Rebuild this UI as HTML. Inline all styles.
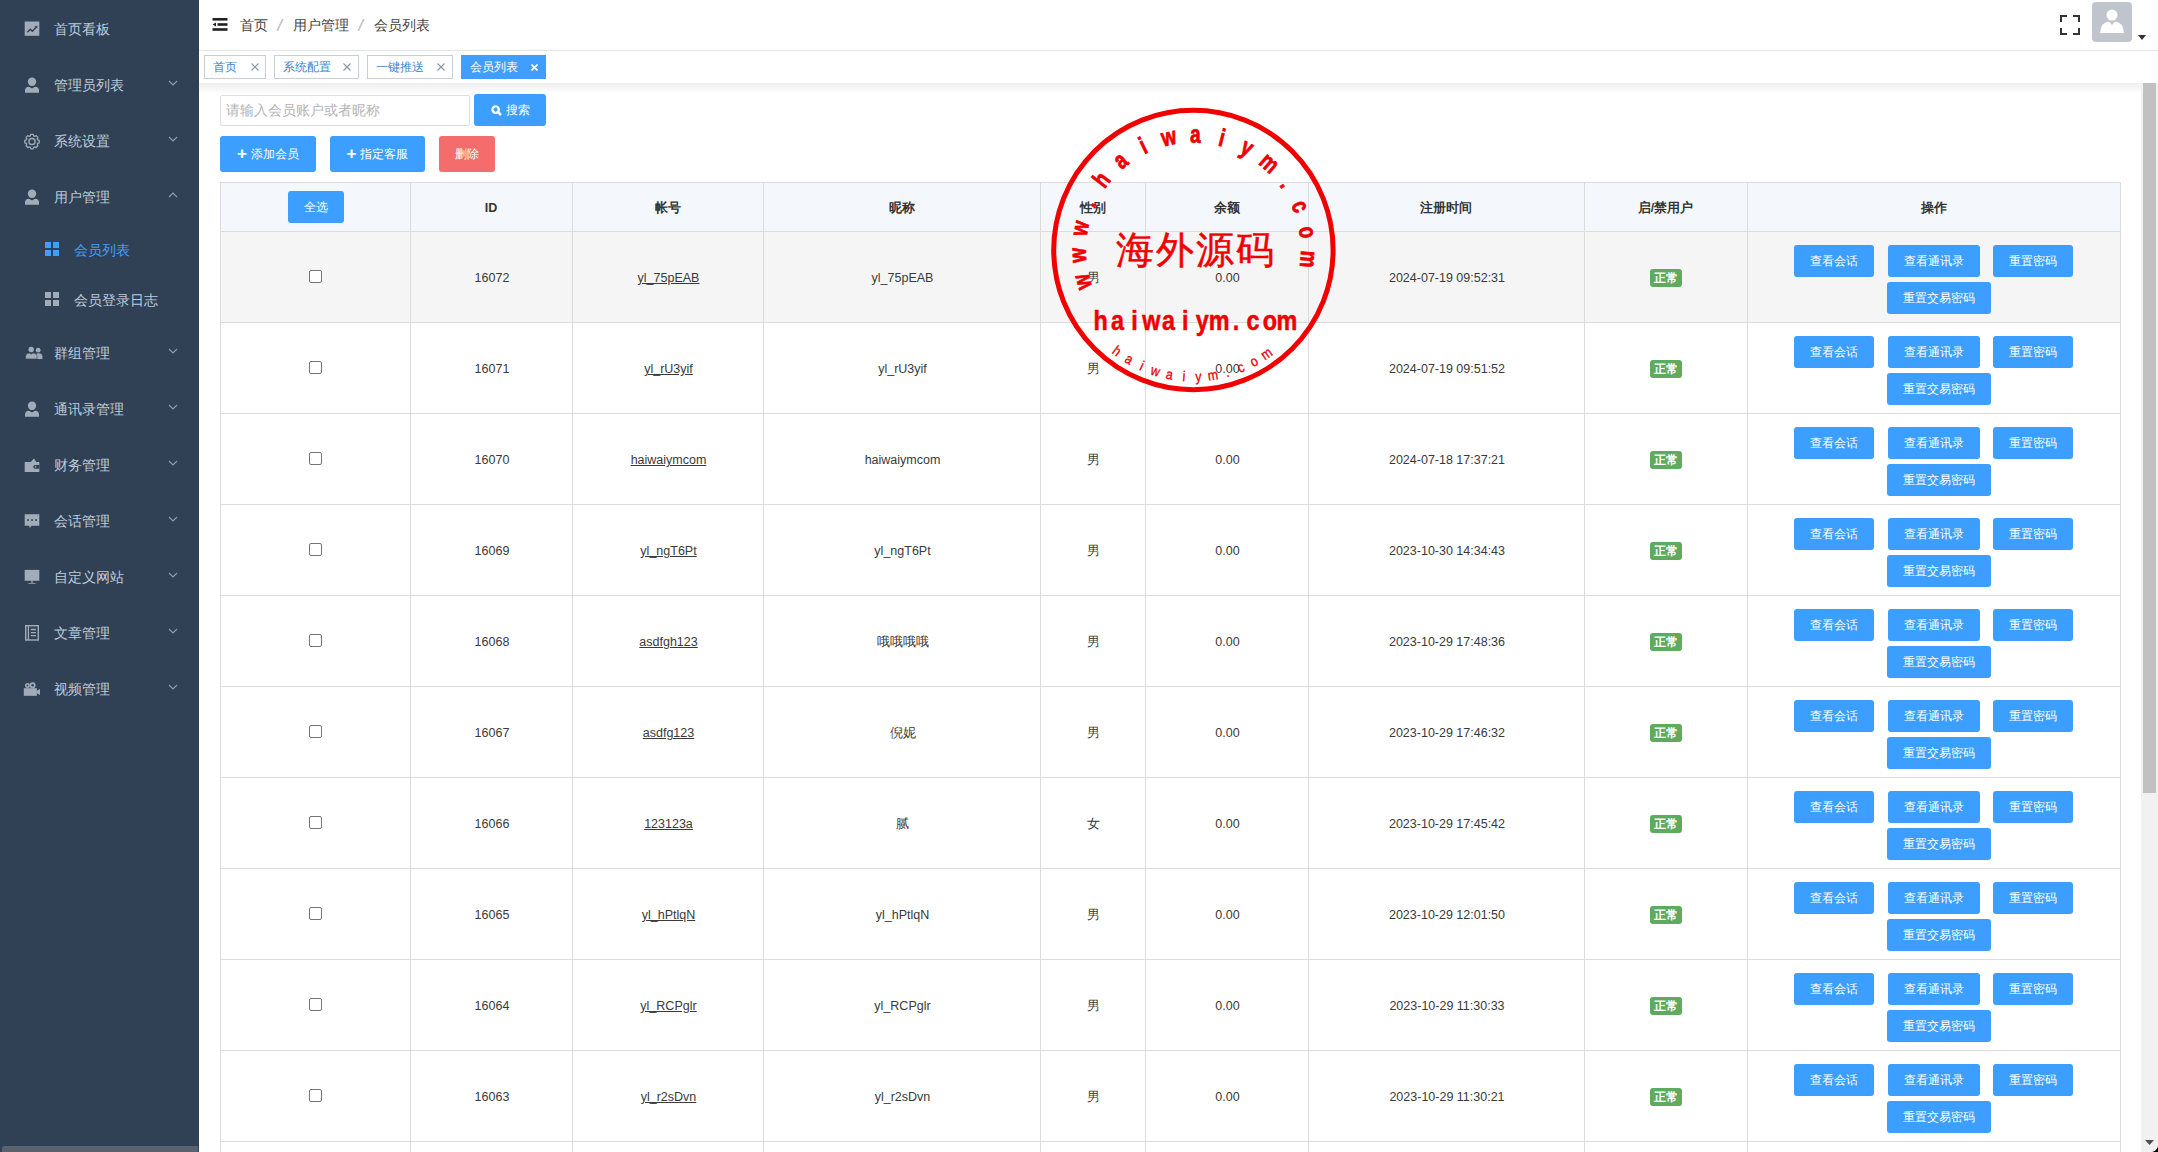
<!DOCTYPE html><html><head><meta charset="utf-8"><style>
*{box-sizing:border-box;margin:0;padding:0}
html,body{width:2158px;height:1152px;overflow:hidden;background:#fff;font-family:"Liberation Sans",sans-serif;}
.abs{position:absolute}
#side{position:absolute;left:0;top:0;width:199px;height:1152px;background:#304156}
.mi{position:absolute;left:0;width:199px;height:56px;color:#bfcbd9;font-size:14px}
.mi .t{position:absolute;left:54px;top:21px;line-height:16px;white-space:nowrap}
.mi .ic{position:absolute;left:25px;top:21px;width:15px;height:15px}
.mi .ar{position:absolute;left:168px;top:24px;width:10px;height:6px}
.sub{position:absolute;left:0;width:199px;height:50px;color:#bfcbd9;font-size:14px}
.sub .t{position:absolute;left:74px;top:18px;line-height:16px;white-space:nowrap}
.sub .ic{position:absolute;left:45px;top:18px;width:14px;height:14px}
#hdr{position:absolute;left:199px;top:0;width:1959px;height:51px;background:#fff;border-bottom:1px solid #e6e6e6}
#tags{position:absolute;left:199px;top:51px;width:1959px;height:32px;background:#fff}
#tagsh{position:absolute;left:199px;top:83px;width:1959px;height:11px;background:linear-gradient(rgba(0,0,0,.065),rgba(0,0,0,0))}
.tag{position:absolute;top:4px;height:24px;border:1px solid #c9ced6;background:#fff;color:#3a85d0;font-size:12px;line-height:22px;padding-left:8px;white-space:nowrap}
.tag .x{position:absolute;top:0;font-size:12px;color:#8aa}
.btn{position:absolute;background:#3c9fff;color:#fff;border-radius:3px;font-size:12px;text-align:center;white-space:nowrap}
.tline{position:absolute;background:#dcdcdc}
.cell{position:absolute;text-align:center;color:#3a3a3a;font-size:12.5px;white-space:nowrap}
.hcell{position:absolute;text-align:center;color:#333;font-size:12.5px;font-weight:bold;white-space:nowrap}
.cb{position:absolute;width:13px;height:13px;border:1px solid #767676;border-radius:2px;background:#fff}
.ok{position:absolute;width:32px;height:18px;background:#5eaa5e;border-radius:3px;color:#fff;font-size:12px;line-height:18px;text-align:center;font-weight:bold}
</style></head><body>
<div id="side">
<div class="mi" style="top:0px"><svg class="abs" style="left:0;top:0" width="50" height="56" viewBox="0 0 50 56"><rect x="24.7" y="21.5" width="14.6" height="14.3" fill="#a2abb8"/><path d="M27.3 32.3 L30.3 29.3 L32.3 31.2 L36.2 27.2" stroke="#304156" stroke-width="1.4" fill="none"/><path d="M37.3 25.8 L37.3 28.6 L34.6 26.1Z" fill="#304156"/></svg><span class="t">首页看板</span></div>
<div class="mi" style="top:56px"><svg class="abs" style="left:0;top:0" width="50" height="56" viewBox="0 0 50 56"><circle cx="32" cy="25.8" r="4.2" fill="#a2abb8"/><path d="M25 36.7 V34.5 Q25 31 29 30.8 L32 32.6 L35 30.8 Q39 31 39 34.5 V36.7Z" fill="#a2abb8"/></svg><span class="t">管理员列表</span><svg class="ar" viewBox="0 0 10 6"><path d="M1 1 L5 5 L9 1" stroke="#909cad" stroke-width="1.2" fill="none"/></svg></div>
<div class="mi" style="top:112px"><svg class="abs" style="left:0;top:0" width="50" height="56" viewBox="0 0 50 56"><path d="M39.20 28.40 L39.20 30.80 L37.63 31.36 L37.23 32.34 L37.94 33.84 L36.24 35.54 L34.74 34.83 L33.76 35.23 L33.20 36.80 L30.80 36.80 L30.24 35.23 L29.26 34.83 L27.76 35.54 L26.06 33.84 L26.77 32.34 L26.37 31.36 L24.80 30.80 L24.80 28.40 L26.37 27.84 L26.77 26.86 L26.06 25.36 L27.76 23.66 L29.26 24.37 L30.24 23.97 L30.80 22.40 L33.20 22.40 L33.76 23.97 L34.74 24.37 L36.24 23.66 L37.94 25.36 L37.23 26.86 L37.63 27.84 Z" stroke="#a2abb8" stroke-width="1.3" fill="none" stroke-linejoin="round"/><circle cx="32" cy="29.6" r="3.1" stroke="#a2abb8" stroke-width="1.3" fill="none"/></svg><span class="t">系统设置</span><svg class="ar" viewBox="0 0 10 6"><path d="M1 1 L5 5 L9 1" stroke="#909cad" stroke-width="1.2" fill="none"/></svg></div>
<div class="mi" style="top:168px"><svg class="abs" style="left:0;top:0" width="50" height="56" viewBox="0 0 50 56"><circle cx="32" cy="25.8" r="4.2" fill="#a2abb8"/><path d="M25 36.7 V34.5 Q25 31 29 30.8 L32 32.6 L35 30.8 Q39 31 39 34.5 V36.7Z" fill="#a2abb8"/></svg><span class="t">用户管理</span><svg class="ar" viewBox="0 0 10 6"><path d="M1 5 L5 1 L9 5" stroke="#909cad" stroke-width="1.2" fill="none"/></svg></div>
<div class="sub" style="top:224px;color:#409eff"><svg class="ic" viewBox="0 0 14 14"><rect x="0" y="0" width="6" height="6" fill="#409eff"/><rect x="8" y="0" width="6" height="6" fill="#409eff"/><rect x="0" y="8" width="6" height="6" fill="#409eff"/><rect x="8" y="8" width="6" height="6" fill="#409eff"/></svg><span class="t">会员列表</span></div>
<div class="sub" style="top:274px"><svg class="ic" viewBox="0 0 14 14"><rect x="0" y="0" width="6" height="6" fill="#a2abb8"/><rect x="8" y="0" width="6" height="6" fill="#a2abb8"/><rect x="0" y="8" width="6" height="6" fill="#a2abb8"/><rect x="8" y="8" width="6" height="6" fill="#a2abb8"/></svg><span class="t">会员登录日志</span></div>
<div class="mi" style="top:324px"><svg class="abs" style="left:0;top:0" width="50" height="56" viewBox="0 0 50 56"><circle cx="38.2" cy="26.2" r="2.4" fill="#a2abb8"/><path d="M35.5 35 V31.5 Q36 29.4 38.2 29.3 Q42.4 29.4 42.4 32.5 V35Z" fill="#a2abb8"/><circle cx="31.2" cy="25.5" r="2.8" fill="#304156" stroke="#304156" stroke-width="1"/><circle cx="31.2" cy="25.5" r="2.7" fill="#a2abb8"/><path d="M25.6 35 V32 Q25.8 29.2 29.5 29 L31.2 30 L33 29 Q37 29.2 37 32 V35Z" fill="#a2abb8" stroke="#304156" stroke-width="0.6"/></svg><span class="t">群组管理</span><svg class="ar" viewBox="0 0 10 6"><path d="M1 1 L5 5 L9 1" stroke="#909cad" stroke-width="1.2" fill="none"/></svg></div>
<div class="mi" style="top:380px"><svg class="abs" style="left:0;top:0" width="50" height="56" viewBox="0 0 50 56"><circle cx="32" cy="25.8" r="4.2" fill="#a2abb8"/><path d="M25 36.7 V34.5 Q25 31 29 30.8 L32 32.6 L35 30.8 Q39 31 39 34.5 V36.7Z" fill="#a2abb8"/></svg><span class="t">通讯录管理</span><svg class="ar" viewBox="0 0 10 6"><path d="M1 1 L5 5 L9 1" stroke="#909cad" stroke-width="1.2" fill="none"/></svg></div>
<div class="mi" style="top:436px"><svg class="abs" style="left:0;top:0" width="50" height="56" viewBox="0 0 50 56"><path d="M30.7 26 L34 22.4 L36.3 26Z" fill="#a2abb8"/><rect x="24.7" y="26" width="14.6" height="10" fill="#a2abb8"/><path d="M39.3 29 H35.2 Q33.2 29 33.2 30.85 Q33.2 32.7 35.2 32.7 H39.3Z" fill="#304156"/><circle cx="35.6" cy="30.85" r="0.8" fill="#a2abb8"/></svg><span class="t">财务管理</span><svg class="ar" viewBox="0 0 10 6"><path d="M1 1 L5 5 L9 1" stroke="#909cad" stroke-width="1.2" fill="none"/></svg></div>
<div class="mi" style="top:492px"><svg class="abs" style="left:0;top:0" width="50" height="56" viewBox="0 0 50 56"><path d="M24.7 22.2 H39.3 V33.7 H31.6 L29.8 36 L29 33.7 H24.7Z" fill="#a2abb8"/><rect x="27.2" y="27.2" width="1.7" height="1.7" fill="#304156"/><rect x="31.2" y="27.2" width="1.7" height="1.7" fill="#304156"/><rect x="35.2" y="27.2" width="1.7" height="1.7" fill="#304156"/></svg><span class="t">会话管理</span><svg class="ar" viewBox="0 0 10 6"><path d="M1 1 L5 5 L9 1" stroke="#909cad" stroke-width="1.2" fill="none"/></svg></div>
<div class="mi" style="top:548px"><svg class="abs" style="left:0;top:0" width="50" height="56" viewBox="0 0 50 56"><rect x="24.7" y="21.9" width="14.6" height="10.9" fill="#a2abb8"/><rect x="31.2" y="32.8" width="1.6" height="1.8" fill="#a2abb8"/><path d="M27.2 35.8 Q32 33.6 36.9 35.8Z" fill="#a2abb8"/></svg><span class="t">自定义网站</span><svg class="ar" viewBox="0 0 10 6"><path d="M1 1 L5 5 L9 1" stroke="#909cad" stroke-width="1.2" fill="none"/></svg></div>
<div class="mi" style="top:604px"><svg class="abs" style="left:0;top:0" width="50" height="56" viewBox="0 0 50 56"><rect x="25.7" y="21.7" width="12.6" height="14.3" stroke="#a2abb8" stroke-width="1.4" fill="none"/><path d="M28.4 22 V36" stroke="#a2abb8" stroke-width="1.3"/><path d="M30.8 25.5 H36 M30.8 28.6 H36 M30.8 31.7 H36" stroke="#a2abb8" stroke-width="1.3"/></svg><span class="t">文章管理</span><svg class="ar" viewBox="0 0 10 6"><path d="M1 1 L5 5 L9 1" stroke="#909cad" stroke-width="1.2" fill="none"/></svg></div>
<div class="mi" style="top:660px"><svg class="abs" style="left:0;top:0" width="50" height="56" viewBox="0 0 50 56"><circle cx="27.5" cy="25.5" r="2.5" fill="#a2abb8"/><circle cx="32.6" cy="25.2" r="3" fill="#a2abb8"/><circle cx="32.6" cy="25.2" r="1.2" fill="#304156"/><circle cx="27.5" cy="25.5" r="0.9" fill="#304156"/><rect x="23.8" y="28.2" width="13.1" height="7.6" fill="#a2abb8"/><path d="M36.9 30.8 L40 28.9 V35 L36.9 33.2Z" fill="#a2abb8"/></svg><span class="t">视频管理</span><svg class="ar" viewBox="0 0 10 6"><path d="M1 1 L5 5 L9 1" stroke="#909cad" stroke-width="1.2" fill="none"/></svg></div>
<div class="abs" style="left:2px;top:1146px;width:196px;height:6px;background:#5a6270;border-radius:3px 0 0 0"></div>
</div>
<div id="hdr">
<svg class="abs" style="left:13px;top:18px" width="16" height="13" viewBox="0 0 16 13"><rect x="0.5" y="0" width="15" height="2.6" fill="#222"/><rect x="5.5" y="5.2" width="10" height="2.6" fill="#222"/><rect x="0.5" y="10.2" width="15" height="2.6" fill="#222"/><path d="M0.6 6.5 L4 4.6 V8.4Z" fill="#222"/></svg>
<div class="abs" style="left:41px;top:17px;font-size:14px;line-height:16px;color:#444;white-space:nowrap">首页</div>
<svg class="abs" style="left:77px;top:19px" width="8" height="12" viewBox="0 0 8 12"><path d="M1.2 12 L6.8 0" stroke="#c0c4cc" stroke-width="1.7"/></svg>
<div class="abs" style="left:94px;top:17px;font-size:14px;line-height:16px;color:#444;white-space:nowrap">用户管理</div>
<svg class="abs" style="left:158px;top:19px" width="8" height="12" viewBox="0 0 8 12"><path d="M1.2 12 L6.8 0" stroke="#c0c4cc" stroke-width="1.7"/></svg>
<div class="abs" style="left:174.5px;top:17px;font-size:14px;line-height:16px;color:#444;white-space:nowrap">会员列表</div>
<svg class="abs" style="left:1861px;top:15px" width="20" height="20" viewBox="0 0 20 20"><path d="M1 7 V1 H7 M13 1 H19 V7 M19 13 V19 H13 M7 19 H1 V13" stroke="#333" stroke-width="2" fill="none"/></svg>
<div class="abs" style="left:1893px;top:2px;width:40px;height:40px;background:#c0c4cc;border-radius:4px;overflow:hidden"><svg width="40" height="40" viewBox="0 0 40 40"><circle cx="20" cy="13" r="5.5" fill="#fff"/><path d="M8 31 Q9 20 17 19.5 L20 23 L23 19.5 Q31 20 32 31Z" fill="#fff"/></svg></div>
<svg class="abs" style="left:1939px;top:35px" width="8" height="5" viewBox="0 0 8 5"><path d="M0 0 H8 L4 5Z" fill="#333"/></svg>
</div>
<div id="tags">
<div class="tag" style="left:5px;width:62px">首页<svg class="x" style="left:46px;top:7px" width="8" height="8" viewBox="0 0 8 8"><path d="M0.5 0.5 L7.5 7.5 M7.5 0.5 L0.5 7.5" stroke="#8795a6" stroke-width="1.1"/></svg></div>
<div class="tag" style="left:75px;width:85px">系统配置<svg class="x" style="left:68px;top:7px" width="8" height="8" viewBox="0 0 8 8"><path d="M0.5 0.5 L7.5 7.5 M7.5 0.5 L0.5 7.5" stroke="#8795a6" stroke-width="1.1"/></svg></div>
<div class="tag" style="left:168px;width:86px">一键推送<svg class="x" style="left:69px;top:7px" width="8" height="8" viewBox="0 0 8 8"><path d="M0.5 0.5 L7.5 7.5 M7.5 0.5 L0.5 7.5" stroke="#8795a6" stroke-width="1.1"/></svg></div>
<div class="tag" style="left:262px;width:85px;background:#409eff;border-color:#409eff;color:#fff">会员列表<svg class="x" style="left:69px;top:8px" width="7" height="7" viewBox="0 0 7 7"><path d="M0.5 0.5 L6.5 6.5 M6.5 0.5 L0.5 6.5" stroke="#fff" stroke-width="1.6"/></svg></div>
</div>
<div id="tagsh"></div>
<div class="abs" style="left:220px;top:95px;width:250px;height:31px;border:1px solid #dcdfe6;border-radius:2px;font-size:14px;color:#b4b4b4;line-height:29px;padding-left:5px;white-space:nowrap">请输入会员账户或者昵称</div>
<div class="btn" style="left:474px;top:94px;width:72px;height:32px;line-height:32px;font-size:12px"><svg style="vertical-align:-2px;margin-right:4px" width="11" height="11" viewBox="0 0 11 11"><circle cx="4.6" cy="4.6" r="3.2" stroke="#fff" stroke-width="2.3" fill="none"/><path d="M7 7 L10 10" stroke="#fff" stroke-width="2.5"/></svg>搜索</div>
<div class="btn" style="left:220px;top:136px;width:96px;height:36px;line-height:36px"><b style="font-size:17px;vertical-align:-1px;margin-right:4px">+</b>添加会员</div>
<div class="btn" style="left:330px;top:136px;width:95px;height:36px;line-height:36px"><b style="font-size:17px;vertical-align:-1px;margin-right:4px">+</b>指定客服</div>
<div class="btn" style="left:439px;top:136px;width:56px;height:36px;line-height:36px;background:#f56c6c">删除</div>
<div class="abs" style="left:221px;top:183px;width:1899px;height:48px;background:#f4f8fc"></div>
<div class="abs" style="left:221px;top:232px;width:1899px;height:90px;background:#f5f5f5"></div>
<div class="tline" style="left:220px;top:182px;width:1901px;height:1px"></div>
<div class="tline" style="left:220px;top:231px;width:1901px;height:1px"></div>
<div class="tline" style="left:220px;top:322px;width:1901px;height:1px"></div>
<div class="tline" style="left:220px;top:413px;width:1901px;height:1px"></div>
<div class="tline" style="left:220px;top:504px;width:1901px;height:1px"></div>
<div class="tline" style="left:220px;top:595px;width:1901px;height:1px"></div>
<div class="tline" style="left:220px;top:686px;width:1901px;height:1px"></div>
<div class="tline" style="left:220px;top:777px;width:1901px;height:1px"></div>
<div class="tline" style="left:220px;top:868px;width:1901px;height:1px"></div>
<div class="tline" style="left:220px;top:959px;width:1901px;height:1px"></div>
<div class="tline" style="left:220px;top:1050px;width:1901px;height:1px"></div>
<div class="tline" style="left:220px;top:1141px;width:1901px;height:1px"></div>
<div class="tline" style="left:220px;top:182px;width:1px;height:970px"></div>
<div class="tline" style="left:410px;top:182px;width:1px;height:970px"></div>
<div class="tline" style="left:572px;top:182px;width:1px;height:970px"></div>
<div class="tline" style="left:763px;top:182px;width:1px;height:970px"></div>
<div class="tline" style="left:1040px;top:182px;width:1px;height:970px"></div>
<div class="tline" style="left:1145px;top:182px;width:1px;height:970px"></div>
<div class="tline" style="left:1308px;top:182px;width:1px;height:970px"></div>
<div class="tline" style="left:1584px;top:182px;width:1px;height:970px"></div>
<div class="tline" style="left:1747px;top:182px;width:1px;height:970px"></div>
<div class="tline" style="left:2120px;top:182px;width:1px;height:970px"></div>
<div class="hcell" style="left:410px;width:162px;top:200px;line-height:16px">ID</div>
<div class="hcell" style="left:572px;width:191px;top:200px;line-height:16px">帐号</div>
<div class="hcell" style="left:763px;width:277px;top:200px;line-height:16px">昵称</div>
<div class="hcell" style="left:1040px;width:105px;top:200px;line-height:16px">性别</div>
<div class="hcell" style="left:1145px;width:163px;top:200px;line-height:16px">余额</div>
<div class="hcell" style="left:1308px;width:276px;top:200px;line-height:16px">注册时间</div>
<div class="hcell" style="left:1584px;width:163px;top:200px;line-height:16px">启/禁用户</div>
<div class="hcell" style="left:1747px;width:373px;top:200px;line-height:16px">操作</div>
<div class="btn" style="left:288px;top:191px;width:56px;height:32px;line-height:32px">全选</div>
<div class="cb" style="left:309px;top:270px"></div>
<div class="cell" style="left:411px;width:162px;top:270px;line-height:16px">16072</div>
<div class="cell" style="left:573px;width:191px;top:270px;line-height:16px"><u>yl_75pEAB</u></div>
<div class="cell" style="left:764px;width:277px;top:270px;line-height:16px">yl_75pEAB</div>
<div class="cell" style="left:1041px;width:105px;top:270px;line-height:16px">男</div>
<div class="cell" style="left:1146px;width:163px;top:270px;line-height:16px">0.00</div>
<div class="cell" style="left:1309px;width:276px;top:270px;line-height:16px">2024-07-19 09:52:31</div>
<div class="ok" style="left:1650px;top:269px">正常</div>
<div class="btn" style="left:1794px;top:245px;width:80px;height:32px;line-height:32px">查看会话</div>
<div class="btn" style="left:1888px;top:245px;width:92px;height:32px;line-height:32px">查看通讯录</div>
<div class="btn" style="left:1993px;top:245px;width:80px;height:32px;line-height:32px">重置密码</div>
<div class="btn" style="left:1887px;top:282px;width:104px;height:32px;line-height:32px">重置交易密码</div>
<div class="cb" style="left:309px;top:361px"></div>
<div class="cell" style="left:411px;width:162px;top:361px;line-height:16px">16071</div>
<div class="cell" style="left:573px;width:191px;top:361px;line-height:16px"><u>yl_rU3yif</u></div>
<div class="cell" style="left:764px;width:277px;top:361px;line-height:16px">yl_rU3yif</div>
<div class="cell" style="left:1041px;width:105px;top:361px;line-height:16px">男</div>
<div class="cell" style="left:1146px;width:163px;top:361px;line-height:16px">0.00</div>
<div class="cell" style="left:1309px;width:276px;top:361px;line-height:16px">2024-07-19 09:51:52</div>
<div class="ok" style="left:1650px;top:360px">正常</div>
<div class="btn" style="left:1794px;top:336px;width:80px;height:32px;line-height:32px">查看会话</div>
<div class="btn" style="left:1888px;top:336px;width:92px;height:32px;line-height:32px">查看通讯录</div>
<div class="btn" style="left:1993px;top:336px;width:80px;height:32px;line-height:32px">重置密码</div>
<div class="btn" style="left:1887px;top:373px;width:104px;height:32px;line-height:32px">重置交易密码</div>
<div class="cb" style="left:309px;top:452px"></div>
<div class="cell" style="left:411px;width:162px;top:452px;line-height:16px">16070</div>
<div class="cell" style="left:573px;width:191px;top:452px;line-height:16px"><u>haiwaiymcom</u></div>
<div class="cell" style="left:764px;width:277px;top:452px;line-height:16px">haiwaiymcom</div>
<div class="cell" style="left:1041px;width:105px;top:452px;line-height:16px">男</div>
<div class="cell" style="left:1146px;width:163px;top:452px;line-height:16px">0.00</div>
<div class="cell" style="left:1309px;width:276px;top:452px;line-height:16px">2024-07-18 17:37:21</div>
<div class="ok" style="left:1650px;top:451px">正常</div>
<div class="btn" style="left:1794px;top:427px;width:80px;height:32px;line-height:32px">查看会话</div>
<div class="btn" style="left:1888px;top:427px;width:92px;height:32px;line-height:32px">查看通讯录</div>
<div class="btn" style="left:1993px;top:427px;width:80px;height:32px;line-height:32px">重置密码</div>
<div class="btn" style="left:1887px;top:464px;width:104px;height:32px;line-height:32px">重置交易密码</div>
<div class="cb" style="left:309px;top:543px"></div>
<div class="cell" style="left:411px;width:162px;top:543px;line-height:16px">16069</div>
<div class="cell" style="left:573px;width:191px;top:543px;line-height:16px"><u>yl_ngT6Pt</u></div>
<div class="cell" style="left:764px;width:277px;top:543px;line-height:16px">yl_ngT6Pt</div>
<div class="cell" style="left:1041px;width:105px;top:543px;line-height:16px">男</div>
<div class="cell" style="left:1146px;width:163px;top:543px;line-height:16px">0.00</div>
<div class="cell" style="left:1309px;width:276px;top:543px;line-height:16px">2023-10-30 14:34:43</div>
<div class="ok" style="left:1650px;top:542px">正常</div>
<div class="btn" style="left:1794px;top:518px;width:80px;height:32px;line-height:32px">查看会话</div>
<div class="btn" style="left:1888px;top:518px;width:92px;height:32px;line-height:32px">查看通讯录</div>
<div class="btn" style="left:1993px;top:518px;width:80px;height:32px;line-height:32px">重置密码</div>
<div class="btn" style="left:1887px;top:555px;width:104px;height:32px;line-height:32px">重置交易密码</div>
<div class="cb" style="left:309px;top:634px"></div>
<div class="cell" style="left:411px;width:162px;top:634px;line-height:16px">16068</div>
<div class="cell" style="left:573px;width:191px;top:634px;line-height:16px"><u>asdfgh123</u></div>
<div class="cell" style="left:764px;width:277px;top:634px;line-height:16px">哦哦哦哦</div>
<div class="cell" style="left:1041px;width:105px;top:634px;line-height:16px">男</div>
<div class="cell" style="left:1146px;width:163px;top:634px;line-height:16px">0.00</div>
<div class="cell" style="left:1309px;width:276px;top:634px;line-height:16px">2023-10-29 17:48:36</div>
<div class="ok" style="left:1650px;top:633px">正常</div>
<div class="btn" style="left:1794px;top:609px;width:80px;height:32px;line-height:32px">查看会话</div>
<div class="btn" style="left:1888px;top:609px;width:92px;height:32px;line-height:32px">查看通讯录</div>
<div class="btn" style="left:1993px;top:609px;width:80px;height:32px;line-height:32px">重置密码</div>
<div class="btn" style="left:1887px;top:646px;width:104px;height:32px;line-height:32px">重置交易密码</div>
<div class="cb" style="left:309px;top:725px"></div>
<div class="cell" style="left:411px;width:162px;top:725px;line-height:16px">16067</div>
<div class="cell" style="left:573px;width:191px;top:725px;line-height:16px"><u>asdfg123</u></div>
<div class="cell" style="left:764px;width:277px;top:725px;line-height:16px">倪妮</div>
<div class="cell" style="left:1041px;width:105px;top:725px;line-height:16px">男</div>
<div class="cell" style="left:1146px;width:163px;top:725px;line-height:16px">0.00</div>
<div class="cell" style="left:1309px;width:276px;top:725px;line-height:16px">2023-10-29 17:46:32</div>
<div class="ok" style="left:1650px;top:724px">正常</div>
<div class="btn" style="left:1794px;top:700px;width:80px;height:32px;line-height:32px">查看会话</div>
<div class="btn" style="left:1888px;top:700px;width:92px;height:32px;line-height:32px">查看通讯录</div>
<div class="btn" style="left:1993px;top:700px;width:80px;height:32px;line-height:32px">重置密码</div>
<div class="btn" style="left:1887px;top:737px;width:104px;height:32px;line-height:32px">重置交易密码</div>
<div class="cb" style="left:309px;top:816px"></div>
<div class="cell" style="left:411px;width:162px;top:816px;line-height:16px">16066</div>
<div class="cell" style="left:573px;width:191px;top:816px;line-height:16px"><u>123123a</u></div>
<div class="cell" style="left:764px;width:277px;top:816px;line-height:16px">腻</div>
<div class="cell" style="left:1041px;width:105px;top:816px;line-height:16px">女</div>
<div class="cell" style="left:1146px;width:163px;top:816px;line-height:16px">0.00</div>
<div class="cell" style="left:1309px;width:276px;top:816px;line-height:16px">2023-10-29 17:45:42</div>
<div class="ok" style="left:1650px;top:815px">正常</div>
<div class="btn" style="left:1794px;top:791px;width:80px;height:32px;line-height:32px">查看会话</div>
<div class="btn" style="left:1888px;top:791px;width:92px;height:32px;line-height:32px">查看通讯录</div>
<div class="btn" style="left:1993px;top:791px;width:80px;height:32px;line-height:32px">重置密码</div>
<div class="btn" style="left:1887px;top:828px;width:104px;height:32px;line-height:32px">重置交易密码</div>
<div class="cb" style="left:309px;top:907px"></div>
<div class="cell" style="left:411px;width:162px;top:907px;line-height:16px">16065</div>
<div class="cell" style="left:573px;width:191px;top:907px;line-height:16px"><u>yl_hPtlqN</u></div>
<div class="cell" style="left:764px;width:277px;top:907px;line-height:16px">yl_hPtlqN</div>
<div class="cell" style="left:1041px;width:105px;top:907px;line-height:16px">男</div>
<div class="cell" style="left:1146px;width:163px;top:907px;line-height:16px">0.00</div>
<div class="cell" style="left:1309px;width:276px;top:907px;line-height:16px">2023-10-29 12:01:50</div>
<div class="ok" style="left:1650px;top:906px">正常</div>
<div class="btn" style="left:1794px;top:882px;width:80px;height:32px;line-height:32px">查看会话</div>
<div class="btn" style="left:1888px;top:882px;width:92px;height:32px;line-height:32px">查看通讯录</div>
<div class="btn" style="left:1993px;top:882px;width:80px;height:32px;line-height:32px">重置密码</div>
<div class="btn" style="left:1887px;top:919px;width:104px;height:32px;line-height:32px">重置交易密码</div>
<div class="cb" style="left:309px;top:998px"></div>
<div class="cell" style="left:411px;width:162px;top:998px;line-height:16px">16064</div>
<div class="cell" style="left:573px;width:191px;top:998px;line-height:16px"><u>yl_RCPglr</u></div>
<div class="cell" style="left:764px;width:277px;top:998px;line-height:16px">yl_RCPglr</div>
<div class="cell" style="left:1041px;width:105px;top:998px;line-height:16px">男</div>
<div class="cell" style="left:1146px;width:163px;top:998px;line-height:16px">0.00</div>
<div class="cell" style="left:1309px;width:276px;top:998px;line-height:16px">2023-10-29 11:30:33</div>
<div class="ok" style="left:1650px;top:997px">正常</div>
<div class="btn" style="left:1794px;top:973px;width:80px;height:32px;line-height:32px">查看会话</div>
<div class="btn" style="left:1888px;top:973px;width:92px;height:32px;line-height:32px">查看通讯录</div>
<div class="btn" style="left:1993px;top:973px;width:80px;height:32px;line-height:32px">重置密码</div>
<div class="btn" style="left:1887px;top:1010px;width:104px;height:32px;line-height:32px">重置交易密码</div>
<div class="cb" style="left:309px;top:1089px"></div>
<div class="cell" style="left:411px;width:162px;top:1089px;line-height:16px">16063</div>
<div class="cell" style="left:573px;width:191px;top:1089px;line-height:16px"><u>yl_r2sDvn</u></div>
<div class="cell" style="left:764px;width:277px;top:1089px;line-height:16px">yl_r2sDvn</div>
<div class="cell" style="left:1041px;width:105px;top:1089px;line-height:16px">男</div>
<div class="cell" style="left:1146px;width:163px;top:1089px;line-height:16px">0.00</div>
<div class="cell" style="left:1309px;width:276px;top:1089px;line-height:16px">2023-10-29 11:30:21</div>
<div class="ok" style="left:1650px;top:1088px">正常</div>
<div class="btn" style="left:1794px;top:1064px;width:80px;height:32px;line-height:32px">查看会话</div>
<div class="btn" style="left:1888px;top:1064px;width:92px;height:32px;line-height:32px">查看通讯录</div>
<div class="btn" style="left:1993px;top:1064px;width:80px;height:32px;line-height:32px">重置密码</div>
<div class="btn" style="left:1887px;top:1101px;width:104px;height:32px;line-height:32px">重置交易密码</div>
<div class="abs" style="left:2141px;top:83px;width:17px;height:1069px;background:#f1f1f1"></div>
<div class="abs" style="left:2143px;top:83px;width:13px;height:710px;background:#c1c1c1"></div>
<svg class="abs" style="left:2152px;top:1146px" width="6" height="6" viewBox="0 0 6 6"><path d="M6 0 V6 H0 Q5 5 6 0Z" fill="#000"/></svg>
<svg class="abs" style="left:2145px;top:1140px" width="9" height="6" viewBox="0 0 9 6"><path d="M0 0 H9 L4.5 5Z" fill="#505050"/></svg>
<svg class="abs" style="left:0;top:0;pointer-events:none" width="2158" height="1152" viewBox="0 0 2158 1152">
<circle cx="1193.4" cy="250.0" r="139.7" stroke="#f00000" stroke-width="5" fill="none"/>
<text transform="translate(1090.0,279.6) rotate(-106.0) scale(0.9,1.17)" text-anchor="middle" font-family="Liberation Sans" font-weight="bold" font-size="21" fill="#f00000" stroke="#f00000" stroke-width="0.7">w</text>
<text transform="translate(1086.0,254.9) rotate(-92.6) scale(0.9,1.17)" text-anchor="middle" font-family="Liberation Sans" font-weight="bold" font-size="21" fill="#f00000" stroke="#f00000" stroke-width="0.7">w</text>
<text transform="translate(1087.8,229.9) rotate(-79.2) scale(0.9,1.17)" text-anchor="middle" font-family="Liberation Sans" font-weight="bold" font-size="21" fill="#f00000" stroke="#f00000" stroke-width="0.7">w</text>
<text transform="translate(1095.3,206.0) rotate(-65.9) scale(0.9,1.17)" text-anchor="middle" font-family="Liberation Sans" font-weight="bold" font-size="21" fill="#f00000" stroke="#f00000" stroke-width="0.7">.</text>
<text transform="translate(1108.1,184.6) rotate(-52.5) scale(0.9,1.17)" text-anchor="middle" font-family="Liberation Sans" font-weight="bold" font-size="21" fill="#f00000" stroke="#f00000" stroke-width="0.7">h</text>
<text transform="translate(1125.6,166.6) rotate(-39.1) scale(0.9,1.17)" text-anchor="middle" font-family="Liberation Sans" font-weight="bold" font-size="21" fill="#f00000" stroke="#f00000" stroke-width="0.7">a</text>
<text transform="translate(1146.7,153.2) rotate(-25.8) scale(0.9,1.17)" text-anchor="middle" font-family="Liberation Sans" font-weight="bold" font-size="21" fill="#f00000" stroke="#f00000" stroke-width="0.7">i</text>
<text transform="translate(1170.3,145.0) rotate(-12.4) scale(0.9,1.17)" text-anchor="middle" font-family="Liberation Sans" font-weight="bold" font-size="21" fill="#f00000" stroke="#f00000" stroke-width="0.7">w</text>
<text transform="translate(1195.2,142.5) rotate(1.0) scale(0.9,1.17)" text-anchor="middle" font-family="Liberation Sans" font-weight="bold" font-size="21" fill="#f00000" stroke="#f00000" stroke-width="0.7">a</text>
<text transform="translate(1220.0,145.9) rotate(14.3) scale(0.9,1.17)" text-anchor="middle" font-family="Liberation Sans" font-weight="bold" font-size="21" fill="#f00000" stroke="#f00000" stroke-width="0.7">i</text>
<text transform="translate(1243.4,154.8) rotate(27.7) scale(0.9,1.17)" text-anchor="middle" font-family="Liberation Sans" font-weight="bold" font-size="21" fill="#f00000" stroke="#f00000" stroke-width="0.7">y</text>
<text transform="translate(1264.0,169.0) rotate(41.1) scale(0.9,1.17)" text-anchor="middle" font-family="Liberation Sans" font-weight="bold" font-size="21" fill="#f00000" stroke="#f00000" stroke-width="0.7">m</text>
<text transform="translate(1280.9,187.5) rotate(54.4) scale(0.9,1.17)" text-anchor="middle" font-family="Liberation Sans" font-weight="bold" font-size="21" fill="#f00000" stroke="#f00000" stroke-width="0.7">.</text>
<text transform="translate(1292.9,209.4) rotate(67.8) scale(0.9,1.17)" text-anchor="middle" font-family="Liberation Sans" font-weight="bold" font-size="21" fill="#f00000" stroke="#f00000" stroke-width="0.7">c</text>
<text transform="translate(1299.6,233.5) rotate(81.2) scale(0.9,1.17)" text-anchor="middle" font-family="Liberation Sans" font-weight="bold" font-size="21" fill="#f00000" stroke="#f00000" stroke-width="0.7">o</text>
<text transform="translate(1300.6,258.5) rotate(94.6) scale(0.9,1.17)" text-anchor="middle" font-family="Liberation Sans" font-weight="bold" font-size="21" fill="#f00000" stroke="#f00000" stroke-width="0.7">m</text>
<text transform="translate(1114.1,354.9) rotate(37.1) scale(0.95,1.1)" text-anchor="middle" font-family="Liberation Sans" font-size="13" fill="#f00000" stroke="#f00000" stroke-width="0.3">h</text>
<text transform="translate(1126.6,363.3) rotate(30.5) scale(0.95,1.1)" text-anchor="middle" font-family="Liberation Sans" font-size="13" fill="#f00000" stroke="#f00000" stroke-width="0.3">a</text>
<text transform="translate(1140.0,370.2) rotate(24.0) scale(0.95,1.1)" text-anchor="middle" font-family="Liberation Sans" font-size="13" fill="#f00000" stroke="#f00000" stroke-width="0.3">i</text>
<text transform="translate(1154.1,375.5) rotate(17.4) scale(0.95,1.1)" text-anchor="middle" font-family="Liberation Sans" font-size="13" fill="#f00000" stroke="#f00000" stroke-width="0.3">w</text>
<text transform="translate(1168.7,379.2) rotate(10.8) scale(0.95,1.1)" text-anchor="middle" font-family="Liberation Sans" font-size="13" fill="#f00000" stroke="#f00000" stroke-width="0.3">a</text>
<text transform="translate(1183.6,381.1) rotate(4.3) scale(0.95,1.1)" text-anchor="middle" font-family="Liberation Sans" font-size="13" fill="#f00000" stroke="#f00000" stroke-width="0.3">i</text>
<text transform="translate(1198.7,381.4) rotate(-2.3) scale(0.95,1.1)" text-anchor="middle" font-family="Liberation Sans" font-size="13" fill="#f00000" stroke="#f00000" stroke-width="0.3">y</text>
<text transform="translate(1213.7,379.9) rotate(-8.9) scale(0.95,1.1)" text-anchor="middle" font-family="Liberation Sans" font-size="13" fill="#f00000" stroke="#f00000" stroke-width="0.3">m</text>
<text transform="translate(1228.4,376.8) rotate(-15.4) scale(0.95,1.1)" text-anchor="middle" font-family="Liberation Sans" font-size="13" fill="#f00000" stroke="#f00000" stroke-width="0.3">.</text>
<text transform="translate(1242.7,371.9) rotate(-22.0) scale(0.95,1.1)" text-anchor="middle" font-family="Liberation Sans" font-size="13" fill="#f00000" stroke="#f00000" stroke-width="0.3">c</text>
<text transform="translate(1256.3,365.5) rotate(-28.6) scale(0.95,1.1)" text-anchor="middle" font-family="Liberation Sans" font-size="13" fill="#f00000" stroke="#f00000" stroke-width="0.3">o</text>
<text transform="translate(1269.1,357.6) rotate(-35.1) scale(0.95,1.1)" text-anchor="middle" font-family="Liberation Sans" font-size="13" fill="#f00000" stroke="#f00000" stroke-width="0.3">m</text>
<text transform="translate(1100.6,330) scale(0.9,1.05)" text-anchor="middle" font-family="Liberation Sans" font-weight="bold" font-size="26" fill="#f00000" stroke="#f00000" stroke-width="0.5">h</text>
<text transform="translate(1117.5,330) scale(0.9,1.05)" text-anchor="middle" font-family="Liberation Sans" font-weight="bold" font-size="26" fill="#f00000" stroke="#f00000" stroke-width="0.5">a</text>
<text transform="translate(1134.5,330) scale(0.9,1.05)" text-anchor="middle" font-family="Liberation Sans" font-weight="bold" font-size="26" fill="#f00000" stroke="#f00000" stroke-width="0.5">i</text>
<text transform="translate(1151.4,330) scale(0.9,1.05)" text-anchor="middle" font-family="Liberation Sans" font-weight="bold" font-size="26" fill="#f00000" stroke="#f00000" stroke-width="0.5">w</text>
<text transform="translate(1168.4,330) scale(0.9,1.05)" text-anchor="middle" font-family="Liberation Sans" font-weight="bold" font-size="26" fill="#f00000" stroke="#f00000" stroke-width="0.5">a</text>
<text transform="translate(1185.3,330) scale(0.9,1.05)" text-anchor="middle" font-family="Liberation Sans" font-weight="bold" font-size="26" fill="#f00000" stroke="#f00000" stroke-width="0.5">i</text>
<text transform="translate(1202.2,330) scale(0.9,1.05)" text-anchor="middle" font-family="Liberation Sans" font-weight="bold" font-size="26" fill="#f00000" stroke="#f00000" stroke-width="0.5">y</text>
<text transform="translate(1219.2,330) scale(0.9,1.05)" text-anchor="middle" font-family="Liberation Sans" font-weight="bold" font-size="26" fill="#f00000" stroke="#f00000" stroke-width="0.5">m</text>
<text transform="translate(1236.1,330) scale(0.9,1.05)" text-anchor="middle" font-family="Liberation Sans" font-weight="bold" font-size="26" fill="#f00000" stroke="#f00000" stroke-width="0.5">.</text>
<text transform="translate(1253.1,330) scale(0.9,1.05)" text-anchor="middle" font-family="Liberation Sans" font-weight="bold" font-size="26" fill="#f00000" stroke="#f00000" stroke-width="0.5">c</text>
<text transform="translate(1270.0,330) scale(0.9,1.05)" text-anchor="middle" font-family="Liberation Sans" font-weight="bold" font-size="26" fill="#f00000" stroke="#f00000" stroke-width="0.5">o</text>
<text transform="translate(1286.9,330) scale(0.9,1.05)" text-anchor="middle" font-family="Liberation Sans" font-weight="bold" font-size="26" fill="#f00000" stroke="#f00000" stroke-width="0.5">m</text>
<text x="1134.5" y="263" text-anchor="middle" font-family="Liberation Serif" font-size="38" fill="#f00000" stroke="#f00000" stroke-width="0.5">海</text>
<text x="1174.5" y="263" text-anchor="middle" font-family="Liberation Serif" font-size="38" fill="#f00000" stroke="#f00000" stroke-width="0.5">外</text>
<text x="1214.5" y="263" text-anchor="middle" font-family="Liberation Serif" font-size="38" fill="#f00000" stroke="#f00000" stroke-width="0.5">源</text>
<text x="1254.5" y="263" text-anchor="middle" font-family="Liberation Serif" font-size="38" fill="#f00000" stroke="#f00000" stroke-width="0.5">码</text>
</svg>
</body></html>
